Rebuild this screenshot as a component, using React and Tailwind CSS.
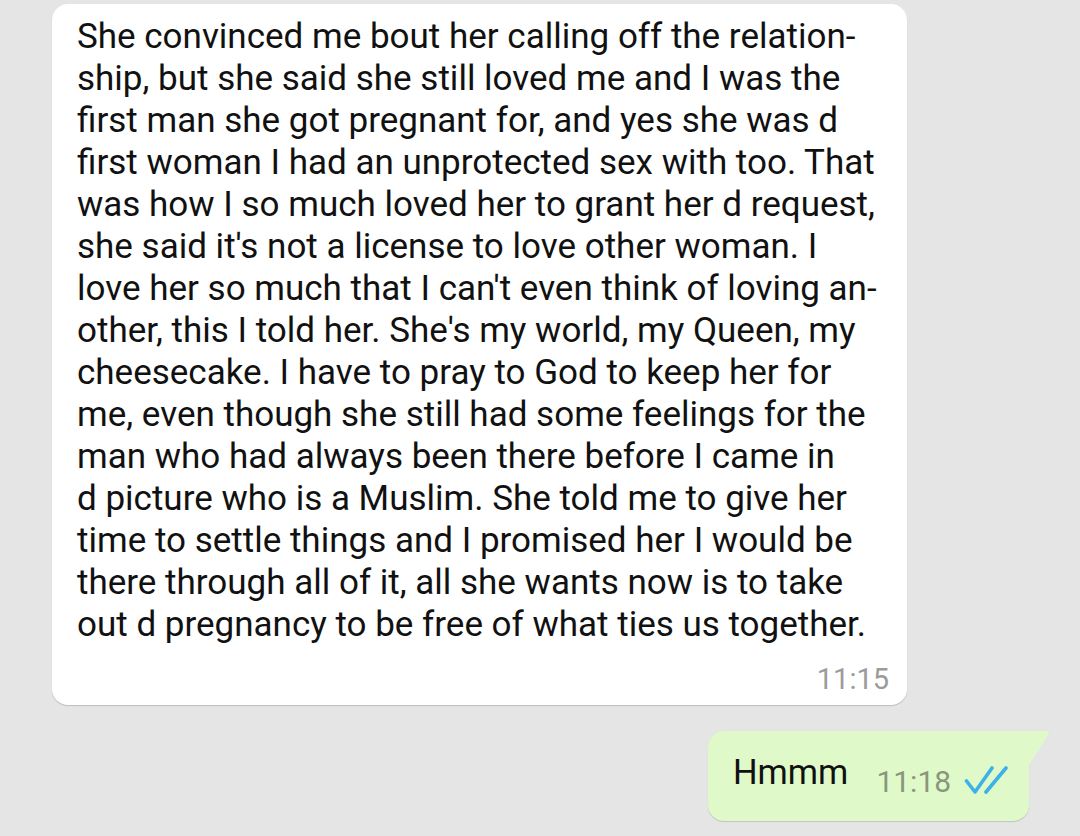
import React from 'react';

const lines = [
  'She convinced me bout her calling off the relation-',
  'ship, but she said she still loved me and I was the',
  'first man she got pregnant for, and yes she was d',
  'first woman I had an unprotected sex with too. That',
  'was how I so much loved her to grant her d request,',
  "she said it's not a license to love other woman. I",
  "love her so much that I can't even think of loving an-",
  "other, this I told her. She's my world, my Queen, my",
  'cheesecake. I have to pray to God to keep her for',
  'me, even though she still had some feelings for the',
  'man who had always been there before I came in',
  'd picture who is a Muslim. She told me to give her',
  'time to settle things and I promised her I would be',
  'there through all of it, all she wants now is to take',
  'out d pregnancy to be free of what ties us together.',
];

const DoubleTick = () => (
  <svg width="44" height="30" viewBox="0 0 44 30" fill="none">
    <path d="M2.5 16 L11 27 L28 3" stroke="#3db2e8" strokeWidth="3.6" strokeLinecap="round" strokeLinejoin="round" />
    <path d="M22 27 L42 3" stroke="#3db2e8" strokeWidth="3.6" strokeLinecap="round" />
  </svg>
);

const App = () => {
  return (
    <div
      className="w-[1080px] h-[836px] bg-[#e5e5e5] overflow-hidden flex flex-col pt-[4px]"
      style={{ fontFamily: 'Roboto, "Liberation Sans", sans-serif' }}
    >
      {/* incoming */}
      <div className="ml-[52px] w-[855px] bg-white rounded-[16px] shadow-[0_1px_1px_rgba(0,0,0,0.18)] pl-[25px] pr-[18px] pt-[12px] pb-[10px] flex flex-col">
        <div className="text-[35px] leading-[42px] text-[#111]">
          {lines.map((l, i) => (
            <div key={i} className="whitespace-nowrap">{l}</div>
          ))}
        </div>
        <div className="self-end mt-[17px] text-[29px] leading-[32px] text-[#9b9b9b]">11:15</div>
      </div>

      {/* outgoing */}
      <div className="mt-[26px] ml-[708px] relative w-[321px] h-[90px]">
        <div className="h-full bg-[#dff9c9] rounded-[16px] rounded-tr-none shadow-[0_1px_1px_rgba(0,0,0,0.15)] flex items-start pl-[25px] pt-[21px]">
          <span className="text-[34.5px] leading-[40px] text-[#111]">Hmmm</span>
          <span className="ml-[28px] mt-[10px] text-[30px] leading-[40px] text-[#87967c]">11:18</span>
          <span className="ml-[13px] mt-[13px]">
            <DoubleTick />
          </span>
        </div>
        <svg className="absolute top-0 left-[320px]" width="22" height="36" viewBox="0 0 22 36">
          <path d="M0 0 L18 0 Q22 0 20.5 3 L1 34 L0 36 Z" fill="#dff9c9" />
        </svg>
      </div>
    </div>
  );
};

export default App;
